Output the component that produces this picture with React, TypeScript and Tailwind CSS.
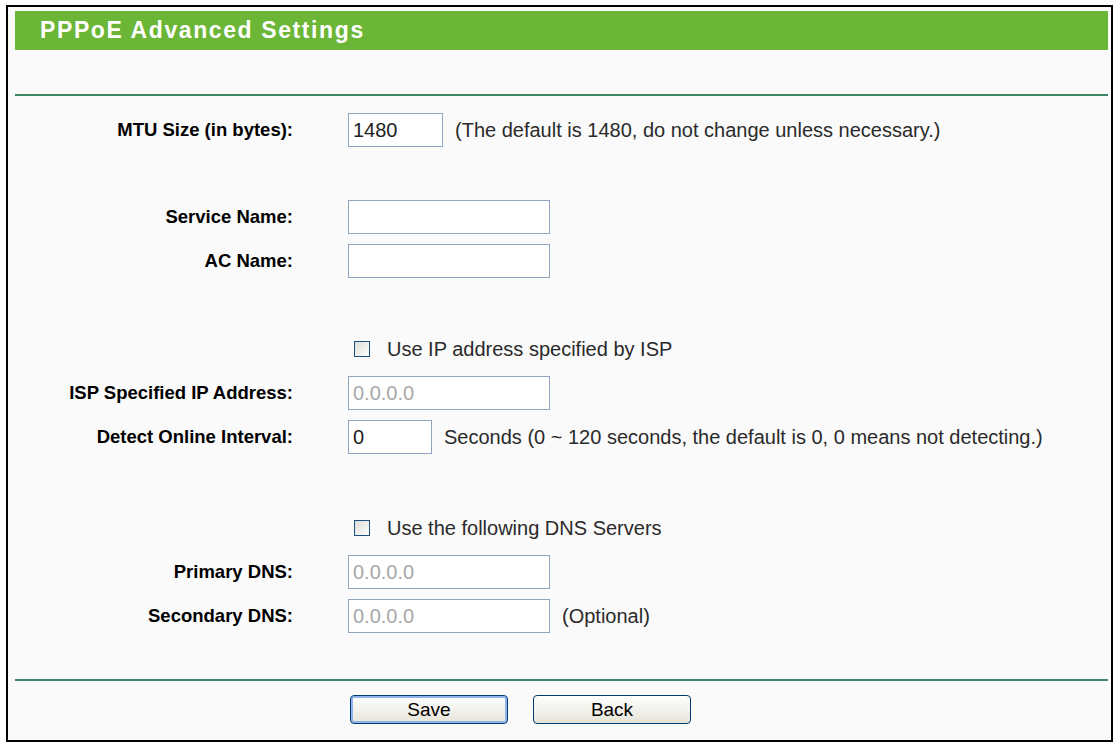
import React from 'react';

const labelCls = "text-right font-bold text-[18.5px] text-black leading-none";
const inputBase = "h-[34px] border border-[#8ea6bf] bg-white px-[4px] text-[20px] leading-none outline-none";

function Field({ label, children }: { label: string; children: React.ReactNode }) {
  return (
    <div className="flex items-center h-[44px]">
      <div className={`w-[278px] ${labelCls}`}>{label}</div>
      <div className="ml-[55px] flex items-center">{children}</div>
    </div>
  );
}

function CheckRow({ text }: { text: string }) {
  return (
    <div className="flex items-center h-[44px]">
      <div className="w-[278px]" />
      <label className="ml-[61px] flex items-center">
        <span className="w-[16px] h-[16px] border border-[#1c5180] bg-gradient-to-br from-[#dcdcd7] to-[#ffffff]" />
        <span className="ml-[17px] text-[20px] text-[#2a2a2a]">{text}</span>
      </label>
    </div>
  );
}

export default function App() {
  return (
    <div className="min-h-screen bg-white pt-[5px] pl-[6px]" style={{ fontFamily: '"Liberation Sans", Arial, sans-serif' }}>
      <div className="w-[1107px] h-[737px] border-2 border-black bg-[#fafafa] pt-[4px] pl-[7px] pr-[3px] flex flex-col">
        <div className="h-[39px] bg-[#6bb636] flex items-center pl-[25px]">
          <h1 className="text-white font-bold text-[23px] tracking-[1.6px]">PPPoE Advanced Settings</h1>
        </div>
        <div className="mt-[44px] h-[2px] bg-[#3d8664]" />

        <div className="mt-[12px]">
          <Field label="MTU Size (in bytes):">
            <input className={`${inputBase} w-[95px] text-[#222]`} defaultValue="1480" />
            <span className="ml-[12px] text-[20px] text-[#2a2a2a]">(The default is 1480, do not change unless necessary.)</span>
          </Field>
        </div>

        <div className="mt-[43px]">
          <Field label="Service Name:">
            <input className={`${inputBase} w-[202px]`} />
          </Field>
          <Field label="AC Name:">
            <input className={`${inputBase} w-[202px]`} />
          </Field>
        </div>

        <div className="mt-[44px]">
          <CheckRow text="Use IP address specified by ISP" />
          <Field label="ISP Specified IP Address:">
            <input className={`${inputBase} w-[202px] text-[#a8a8a8]`} defaultValue="0.0.0.0" disabled />
          </Field>
          <Field label="Detect Online Interval:">
            <input className={`${inputBase} w-[84px] text-[#222]`} defaultValue="0" />
            <span className="ml-[12px] text-[20px] text-[#2a2a2a]">Seconds (0 ~ 120 seconds, the default is 0, 0 means not detecting.)</span>
          </Field>
        </div>

        <div className="mt-[47px]">
          <CheckRow text="Use the following DNS Servers" />
          <Field label="Primary DNS:">
            <input className={`${inputBase} w-[202px] text-[#a8a8a8]`} defaultValue="0.0.0.0" disabled />
          </Field>
          <Field label="Secondary DNS:">
            <input className={`${inputBase} w-[202px] text-[#a8a8a8]`} defaultValue="0.0.0.0" disabled />
            <span className="ml-[12px] text-[20px] text-[#2a2a2a]">(Optional)</span>
          </Field>
        </div>

        <div className="mt-[41px] h-[2px] bg-[#3d8664]" />

        <div className="mt-[14px] flex pl-[335px] gap-[25px]">
          <button className="w-[158px] h-[29px] rounded-[4px] border border-[#003c74] bg-gradient-to-b from-white to-[#e6e4d8] text-[19px] text-black shadow-[inset_0_0_0_2px_#8fb3ea]">Save</button>
          <button className="w-[158px] h-[29px] rounded-[4px] border border-[#003c74] bg-gradient-to-b from-white to-[#e6e4d8] text-[19px] text-black">Back</button>
        </div>
      </div>
    </div>
  );
}
